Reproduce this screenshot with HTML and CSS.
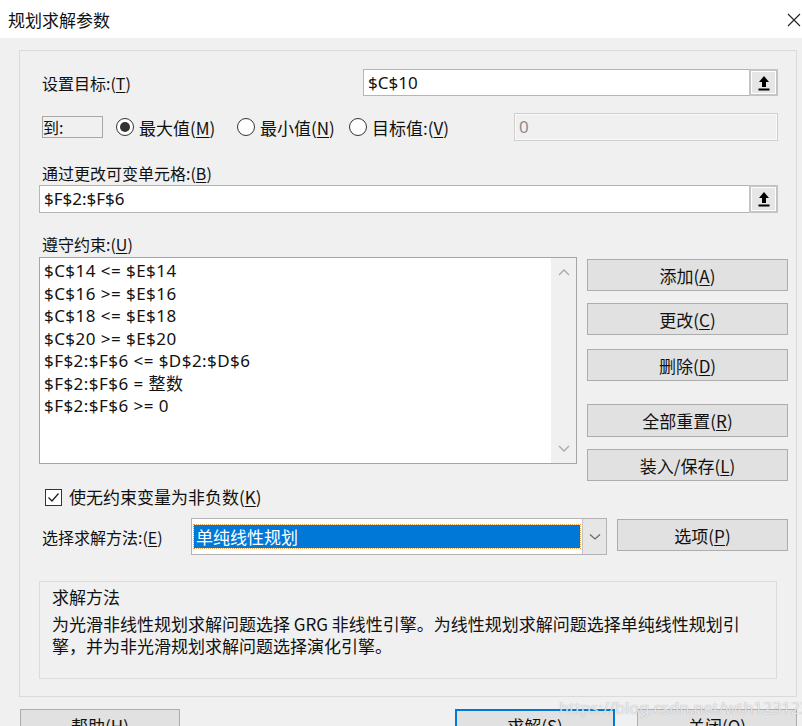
FILE: index.html
```html
<!DOCTYPE html>
<html lang="zh-CN">
<head>
<meta charset="utf-8">
<title>规划求解参数</title>
<link rel="stylesheet" href="styles.css">
</head>
<body>
<div class="titlebar">
  <span class="title">规划求解参数</span>
  <svg class="close" width="14" height="14" viewBox="0 0 14 14"><path d="M1 1 L13 13 M13 1 L1 13" stroke="#222" stroke-width="1.1" fill="none"/></svg>
</div>
<div class="content">
  <div class="panel">
    <div class="row r1">
      <span class="lbl">设置目标:(<u>T</u>)</span>
      <div class="field target">
        <span class="val">$C$10</span>
        <span class="refbtn"><svg width="12" height="16" viewBox="0 0 12 16"><path d="M6 1 L11 7 L8 7 L8 12 L4 12 L4 7 L1 7 Z" fill="#000"/><rect x="0.5" y="13.5" width="11" height="2" fill="#000"/></svg></span>
      </div>
    </div>
    <div class="row r2">
      <span class="tobox">到:</span>
      <span class="radio w1"><span class="circle on"></span>最大值(<u>M</u>)</span>
      <span class="radio w2"><span class="circle"></span>最小值(<u>N</u>)</span>
      <span class="radio"><span class="circle"></span>目标值:(<u>V</u>)</span>
      <div class="field disabled"><span class="val">0</span></div>
    </div>
    <div class="lbl r3lbl">通过更改可变单元格:(<u>B</u>)</div>
    <div class="field full">
      <span class="val">$F$2:$F$6</span>
      <span class="refbtn"><svg width="12" height="16" viewBox="0 0 12 16"><path d="M6 1 L11 7 L8 7 L8 12 L4 12 L4 7 L1 7 Z" fill="#000"/><rect x="0.5" y="13.5" width="11" height="2" fill="#000"/></svg></span>
    </div>
    <div class="constraints">
      <div class="cleft">
        <div class="lbl">遵守约束:(<u>U</u>)</div>
        <div class="list">
          <div class="items">
            <div>$C$14 &lt;= $E$14</div>
            <div>$C$16 &gt;= $E$16</div>
            <div>$C$18 &lt;= $E$18</div>
            <div>$C$20 &gt;= $E$20</div>
            <div>$F$2:$F$6 &lt;= $D$2:$D$6</div>
            <div>$F$2:$F$6 = 整数</div>
            <div>$F$2:$F$6 &gt;= 0</div>
          </div>
          <div class="scroll">
            <svg width="12" height="8" viewBox="0 0 12 8"><path d="M1 7 L6 2 L11 7" stroke="#a8a8a8" stroke-width="1.3" fill="none"/></svg>
            <svg width="12" height="8" viewBox="0 0 12 8"><path d="M1 1 L6 6 L11 1" stroke="#a8a8a8" stroke-width="1.3" fill="none"/></svg>
          </div>
        </div>
      </div>
      <div class="cbtns">
        <div class="btn b1">添加(<u>A</u>)</div>
        <div class="btn b2">更改(<u>C</u>)</div>
        <div class="btn b3">删除(<u>D</u>)</div>
        <div class="btn b4">全部重置(<u>R</u>)</div>
        <div class="btn b5">装入/保存(<u>L</u>)</div>
      </div>
    </div>
    <div class="checkrow">
      <span class="checkbox"><svg width="15" height="15" viewBox="0 0 15 15"><path d="M2.5 7.5 L6 11 L12.5 3.5" stroke="#222" stroke-width="1.3" fill="none"/></svg></span>
      <span class="chklbl">使无约束变量为非负数(<u>K</u>)</span>
    </div>
    <div class="methodrow">
      <span class="lbl">选择求解方法:(<u>E</u>)</span>
      <div class="combo">
        <div class="combo-val"><span class="sel">单纯线性规划</span></div>
        <div class="combo-arrow"><svg width="12" height="8" viewBox="0 0 12 8"><path d="M1 1.5 L6 6 L11 1.5" stroke="#666" stroke-width="1.2" fill="none"/></svg></div>
      </div>
      <div class="btn opt">选项(<u>P</u>)</div>
    </div>
    <div class="group">
      <div class="gtitle">求解方法</div>
      <div class="gdesc">
        <span class="line">为光滑非线性规划求解问题选择 GRG 非线性引擎。为线性规划求解问题选择单纯线性规划引</span>
        <span class="line">擎，并为非光滑规划求解问题选择演化引擎。</span>
      </div>
    </div>
  </div>
  <div class="footer">
    <div class="btn fbtn help">帮助(<u>H</u>)</div>
    <div class="btn fbtn solve">求解(<u>S</u>)</div>
    <div class="btn fbtn closebtn">关闭(<u>O</u>)</div>
  </div>
</div>
<div class="watermark">https://blog.csdn.net/wth1231232</div>
</body>
</html>
```

FILE: styles.css
```css
* { box-sizing: border-box; }
html, body { margin: 0; padding: 0; }
body {
  width: 802px;
  height: 726px;
  overflow: hidden;
  background: #f0f0f0;
  font-family: "Noto Sans", "Noto Sans CJK SC", sans-serif;
  color: #111;
  position: relative;
}
u { text-decoration: underline; text-underline-offset: 2px; }

.titlebar {
  height: 38px;
  background: #fff;
  display: flex;
  align-items: center;
  justify-content: space-between;
  padding-left: 8px;
}
.title { font-size: 17px; font-family: "Noto Sans CJK SC", sans-serif; }
.close { margin-right: 1px; margin-top: 1px; }

.content { padding: 12px 5px 0 19px; }

.panel {
  border: 1px solid #dadada;
  height: 647px;
  padding: 18px 18px 0 19px;
  display: flex;
  flex-direction: column;
}

.lbl { font-size: 16px; font-family: "Noto Sans CJK SC", sans-serif; padding-left: 3px; line-height: 20px; white-space: nowrap; }

.row { display: flex; align-items: center; }
.r1 { height: 27px; }
.r2 { height: 28px; margin-top: 17px; }

.field {
  border: 1px solid #b5b5b5;
  background: #fff;
  display: flex;
  align-items: center;
  font-size: 17px;
  position: relative;
}
.field .val { padding-left: 4px; flex: 1; line-height: 24px; }
.target { width: 415px; height: 27px; margin-left: auto; }
.refbtn {
  width: 29px;
  align-self: stretch;
  margin: -1px -1px -1px 0;
  background: #e6e6e6;
  border: 2px solid #c4c4c4;
  display: flex;
  align-items: center;
  justify-content: center;
  box-shadow: inset 0 0 0 1px #fff;
}

.tobox {
  margin-left: 3px;
  width: 61px;
  height: 22px;
  border: 1px solid #a8a8a8;
  font-size: 16px;
  line-height: 20px;
  font-family: "Noto Sans CJK SC", sans-serif;
  padding-left: 0;
}
.radio {
  display: flex;
  align-items: center;
  font-size: 17px;
  font-family: "Noto Sans CJK SC", sans-serif;
  white-space: nowrap;
}
.radio.w1 { margin-left: 13px; width: 121px; }
.radio.w2 { width: 112px; }
.circle {
  width: 18px;
  height: 18px;
  border: 1px solid #333;
  border-radius: 50%;
  background: #fff;
  margin-right: 5px;
  display: flex;
  align-items: center;
  justify-content: center;
  flex: none;
}
.circle.on::after {
  content: "";
  width: 10px;
  height: 10px;
  border-radius: 50%;
  background: #333;
}
.disabled {
  margin-left: auto;
  width: 264px;
  height: 28px;
  background: #f0f0f0;
  border: 1px solid #cfcfcf;
  box-shadow: inset 0 0 0 1px #fafafa;
  color: #8c8c8c;
}

.r3lbl { margin-top: 22px; height: 20px; }
.full { margin-top: 2px; height: 28px; width: 739px; }

.constraints { margin-top: 21px; height: 247px; display: flex; }
.cleft { width: 538px; }
.list {
  margin-top: 3px;
  height: 207px;
  border: 1px solid #a5a5a5;
  background: #fff;
  display: flex;
}
.items {
  flex: 1;
  padding: 2px 0 0 4px;
  font-size: 17px;
  line-height: 22.5px;
  letter-spacing: 0.45px;
  white-space: nowrap;
}
.scroll {
  width: 25px;
  background: #f0f0f0;
  display: flex;
  flex-direction: column;
  justify-content: space-between;
  align-items: center;
  padding: 10px 0 10px;
}
.cbtns {
  margin-left: auto;
  margin-right: -10px;
  width: 201px;
  padding-top: 25px;
  display: flex;
  flex-direction: column;
}
.btn {
  background: #e1e1e1;
  border: 1px solid #adadad;
  display: flex;
  align-items: center;
  justify-content: center;
  font-size: 17px;
  font-family: "Noto Sans CJK SC", sans-serif;
  height: 32px;
  white-space: nowrap;
}
.b2 { margin-top: 12px; }
.b3 { margin-top: 14px; }
.b4 { margin-top: 23px; height: 33px; }
.b5 { margin-top: 12px; }

.checkrow { margin-top: 8px; height: 16px; display: flex; align-items: center; }
.checkbox {
  margin-left: 6px;
  width: 17px;
  height: 17px;
  border: 1px solid #333;
  background: #fff;
  display: flex;
  align-items: center;
  justify-content: center;
  flex: none;
}
.chklbl { margin-left: 7px; font-size: 17px; font-family: "Noto Sans CJK SC", sans-serif; white-space: nowrap; line-height: 20px; }

.methodrow { margin-top: 13px; height: 37px; display: flex; align-items: center; }
.combo {
  margin-left: auto;
  width: 416px;
  height: 37px;
  border: 1px solid #b3b3b3;
  background: #fff;
  display: flex;
}
.combo-val { flex: 1; padding: 6px 2px 6px 2px; }
.sel {
  display: flex;
  align-items: center;
  height: 100%;
  background: #0078d7;
  color: #fff;
  font-size: 17px;
  font-family: "Noto Sans CJK SC", sans-serif;
  padding-left: 2px;
  outline: 1px dotted #e8a04a;
}
.combo-arrow {
  width: 24px;
  background: #e6e6e6;
  border-left: 1px solid #c4c4c4;
  display: flex;
  align-items: center;
  justify-content: center;
}
.opt { margin-left: 10px; margin-right: -10px; width: 171px; align-self: flex-start; margin-top: 1px; }

.group {
  margin-top: 26px;
  width: 738px;
  height: 98px;
  border: 1px solid #dcdcdc;
  padding: 4px 0 0 12px;
  font-family: "Noto Sans CJK SC", sans-serif;
  font-size: 17px;
}
.gtitle { line-height: 22px; }
.gdesc { margin-top: 5px; line-height: 22px; }
.gdesc .line { display: block; white-space: nowrap; }

.footer { margin-top: 12px; display: flex; margin-left: 1px; }
.fbtn { width: 160px; height: 32px; }
.solve { margin-left: 275px; border: 2px solid #0078d7; }
.closebtn { margin-left: 22px; }

.watermark {
  position: absolute;
  left: 559px;
  top: 697px;
  font-family: "Noto Sans", sans-serif;
  font-size: 16.3px;
  color: rgba(255, 255, 255, 0.75);
  text-shadow: 0 0 1px rgba(120, 120, 120, 0.7);
}
```
